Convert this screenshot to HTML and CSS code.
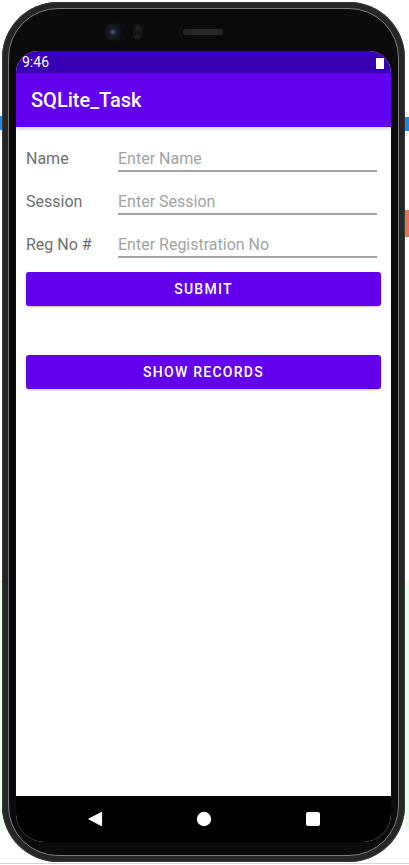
FILE: index.html
```html
<!DOCTYPE html>
<html lang="en">
<head>
  <meta charset="UTF-8">
  <title>SQLite_Task</title>
  <link rel="stylesheet" href="styles.css">
</head>
<body>
  <div class="phone">
    <div class="bezel">
      <div class="sensors">
        <span class="camera"></span>
        <span class="sensor"><i></i><i></i></span>
        <span class="speaker"></span>
      </div>

      <div class="screen">
        <div class="status-bar">
          <span class="clock">9:46</span>
          <span class="battery"></span>
        </div>

        <div class="app-bar">SQLite_Task</div>

        <div class="content">
          <form class="form">
            <label class="row">
              <span class="label">Name</span>
              <input class="field" type="text" placeholder="Enter Name">
            </label>
            <label class="row">
              <span class="label">Session</span>
              <input class="field" type="text" placeholder="Enter Session">
            </label>
            <label class="row">
              <span class="label">Reg No #</span>
              <input class="field" type="text" placeholder="Enter Registration No">
            </label>

            <button type="button" class="btn submit">Submit</button>
            <button type="button" class="btn records">Show Records</button>
          </form>
        </div>

        <div class="nav-bar">
          <svg class="nav-icon" viewBox="0 0 16 16">
            <polygon points="14.5,1.5 14.5,14.5 2,8" fill="#fff" stroke="#fff" stroke-width="1.2" stroke-linejoin="round"/>
          </svg>
          <svg class="nav-icon" viewBox="0 0 16 16">
            <circle cx="8" cy="8" r="7.2" fill="#fff"/>
          </svg>
          <svg class="nav-icon" viewBox="0 0 16 16">
            <rect x="1" y="1" width="14" height="14" rx="2" fill="#fff"/>
          </svg>
        </div>
      </div>
    </div>
  </div>
</body>
</html>
```

FILE: styles.css
```css
body {
  margin: 0;
  width: 409px;
  height: 865px;
  overflow: hidden;
  font-family: Roboto, "Noto Sans", sans-serif;
  background:
    linear-gradient(#1e88e5, #1e88e5) 405px 117px / 4px 14px no-repeat,
    linear-gradient(#1e88e5, #1e88e5) 0 116px / 2px 14px no-repeat,
    linear-gradient(#e8734f, #e8734f) 405px 210px / 4px 27px no-repeat,
    linear-gradient(#e9fbe9, #e9fbe9) 405px 580px / 4px 250px no-repeat,
    linear-gradient(#e9fbe9, #e9fbe9) 0 580px / 3px 250px no-repeat,
    linear-gradient(#d6d6d6, #d6d6d6) 0 863px / 409px 1px no-repeat,
    #fff;
}

/* device frame */
.phone {
  width: 403px;
  height: 860px;
  margin: 2px 0 0 2px;
  padding: 6px;
  box-sizing: border-box;
  border-radius: 56px;
  background: #262626;
  box-shadow: inset 0 0 0 1px #3a3a3a;
}

.bezel {
  height: 100%;
  box-sizing: border-box;
  padding: 0 7px 13px;
  border: 1px solid #7c7c7c;
  border-radius: 50px;
  background: #0b0b0d;
  display: flex;
  flex-direction: column;
}

.sensors {
  height: 42px;
  padding: 4px 0 0 88px;
  box-sizing: border-box;
  display: flex;
  align-items: center;
}

.camera {
  width: 18px;
  height: 18px;
  border-radius: 50%;
  background: radial-gradient(circle at 50% 50%, #4c5c8a 0, #1e2230 3px, #15161b 6px, #101014 9px);
}

.sensor {
  width: 9px;
  height: 16px;
  margin-left: 11px;
  border-radius: 5px;
  background: #16161a;
  display: flex;
  flex-direction: column;
  align-items: center;
  justify-content: space-around;
}

.sensor i {
  width: 5px;
  height: 5px;
  border-radius: 50%;
  background: #1f1f24;
}

.speaker {
  width: 40px;
  height: 6px;
  margin-left: 41px;
  border-radius: 3px;
  background: #27272b;
}

/* screen */
.screen {
  height: 791px;
  display: flex;
  flex-direction: column;
  overflow: hidden;
  border-radius: 22px 22px 28px 28px;
  background: #fff;
}

.status-bar {
  height: 22px;
  flex-shrink: 0;
  padding: 0 7px 0 6px;
  display: flex;
  align-items: center;
  justify-content: space-between;
  background: #3700b3;
  color: #fff;
  font-size: 14px;
}

.battery {
  width: 8px;
  height: 11px;
  margin-top: 2px;
  background: #fff;
}

.app-bar {
  position: relative;
  z-index: 1;
  height: 54px;
  flex-shrink: 0;
  padding-left: 15px;
  display: flex;
  align-items: center;
  background: #6200ee;
  color: #fff;
  font-size: 20px;
  font-weight: 500;
  box-shadow: 0 2px 3px rgba(0, 0, 0, 0.18);
}

.content {
  flex: 1;
  padding: 2px 10px 0;
}

.form {
  display: flex;
  flex-direction: column;
}

.row {
  height: 43px;
  padding-right: 4px;
  display: flex;
  align-items: flex-end;
}

.label {
  width: 92px;
  padding-bottom: 4px;
  font-size: 16px;
  line-height: 19px;
  color: #6f6f6f;
}

.field {
  flex: 1;
  min-width: 0;
  height: 43px;
  box-sizing: border-box;
  padding: 20px 0 2px;
  margin: 0;
  border: none;
  border-bottom: 2px solid #a2a2a2;
  background: transparent;
  outline: none;
  font-family: inherit;
  font-size: 16px;
  line-height: 19px;
  color: #333;
}

.field::placeholder {
  color: #a3a3a3;
}

.btn {
  height: 34px;
  margin: 0;
  border: none;
  border-radius: 3px;
  background: #6200ee;
  color: #fff;
  font-family: inherit;
  font-size: 14px;
  font-weight: 500;
  letter-spacing: 1.25px;
  text-transform: uppercase;
  box-shadow: 0 1px 2px rgba(0, 0, 0, 0.25);
}

.submit {
  margin-top: 14px;
}

.records {
  margin-top: 49px;
}

.nav-bar {
  height: 46px;
  flex-shrink: 0;
  display: flex;
  align-items: center;
  justify-content: center;
  gap: 93px;
  background: #000;
}

.nav-icon {
  width: 16px;
  height: 16px;
}
```
